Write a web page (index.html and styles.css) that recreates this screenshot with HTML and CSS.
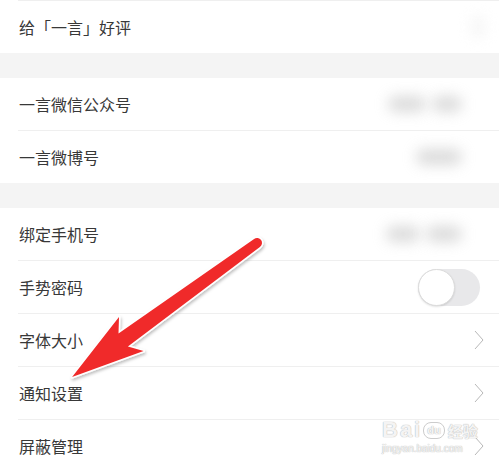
FILE: index.html
```html
<!DOCTYPE html>
<html lang="zh-CN">
<head>
    <meta charset="UTF-8">
    <meta name="viewport" content="width=device-width, initial-scale=1.0">
    <title>设置</title>
    <link rel="stylesheet" href="styles.css">
</head>
<body>
    <div class="settings">
        <div class="group group-cut">
            <div class="row">
                <span class="label">给「一言」好评</span>
                <span class="value"><span class="fuzz fuzz-chev"></span></span>
            </div>
        </div>

        <div class="gap"></div>

        <div class="group">
            <div class="row">
                <span class="label">一言微信公众号</span>
                <span class="value">
                    <span class="fuzz fuzz-a"></span>
                    <span class="fuzz fuzz-b"></span>
                </span>
            </div>
            <div class="row">
                <span class="label">一言微博号</span>
                <span class="value"><span class="fuzz fuzz-c"></span></span>
            </div>
        </div>

        <div class="gap"></div>

        <div class="group">
            <div class="row">
                <span class="label">绑定手机号</span>
                <span class="value">
                    <span class="fuzz fuzz-d"></span>
                    <span class="fuzz fuzz-e"></span>
                </span>
            </div>
            <div class="row">
                <span class="label">手势密码</span>
                <span class="switch"><span class="knob"></span></span>
            </div>
            <div class="row">
                <span class="label">字体大小</span>
                <svg class="chevron" viewBox="0 0 10 20"><path d="M1 1 L9 10 L1 19"/></svg>
            </div>
            <div class="row">
                <span class="label">通知设置</span>
                <svg class="chevron" viewBox="0 0 10 20"><path d="M1 1 L9 10 L1 19"/></svg>
            </div>
            <div class="row">
                <span class="label">屏蔽管理</span>
                <svg class="chevron" viewBox="0 0 10 20"><path d="M1 1 L9 10 L1 19"/></svg>
            </div>
        </div>
    </div>

    <!-- annotation arrow drawn over the screenshot -->
    <svg class="arrow" viewBox="0 0 499 465" width="499" height="465">
        <defs>
            <filter id="shade" x="-10%" y="-10%" width="130%" height="130%">
                <feDropShadow dx="1" dy="2" stdDeviation="1.5" flood-color="#000" flood-opacity="0.25"/>
            </filter>
        </defs>
        <path d="M254.1 238.9 L118.5 333.5 L119 317.1 L72.1 377.1 L143.6 351.1 L127.9 346.5 L259.9 247.1 A5 5 0 0 0 254.1 238.9 Z"
              fill="#f02a2a" stroke="#fff" stroke-width="3" stroke-linejoin="round" paint-order="stroke" filter="url(#shade)"/>
    </svg>

    <div class="watermark">
        <div class="wm-logo">Bai<span class="wm-du">du</span><span class="wm-jy">经验</span></div>
        <div class="wm-url">jingyan.baidu.com</div>
    </div>
</body>
</html>
```

FILE: styles.css
```css
body {
    margin: 0;
    width: 499px;
    height: 465px;
    overflow: hidden;
    position: relative;
    background: #fff;
    font-family: "Noto Sans CJK SC", "Noto Sans", sans-serif;
    color: #383838;
}
.group {
    background: #fff;
}
.group-cut {
    border-top: 1px solid #efefef;
    margin-left: 18px;
}
.group-cut .row {
    margin-left: 0;
}
.gap {
    height: 25px;
    background: #f4f4f4;
}
.row {
    height: 52px;
    margin-left: 18px;
    padding: 0 15px 0 1px;
    display: flex;
    align-items: center;
    justify-content: space-between;
    font-size: 16px;
}
.row + .row {
    border-top: 1px solid #efefef;
}
.value {
    display: flex;
    align-items: center;
    gap: 6px;
    height: 24px;
}
.fuzz {
    display: block;
    height: 16px;
    border-radius: 8px;
    background: #c8c8c8;
    filter: blur(7px);
    opacity: 0.65;
}
.fuzz-chev {
    width: 12px;
    height: 22px;
    background: #eee;
}
.fuzz-a { width: 38px; }
.fuzz-b { width: 30px; margin-right: 22px; }
.fuzz-c { width: 46px; margin-right: 22px; }
.fuzz-d { width: 34px; }
.fuzz-e { width: 36px; margin-right: 22px; }
.switch {
    width: 62px;
    height: 37px;
    border-radius: 19px;
    background: #e8e8ea;
    position: relative;
    margin-right: 4px;
}
.knob {
    position: absolute;
    left: 0;
    top: 0;
    width: 35px;
    height: 35px;
    border-radius: 50%;
    background: #fff;
    border: 1px solid #dcdcdc;
    box-shadow: 0 1px 2px rgba(0, 0, 0, 0.12);
}
.chevron {
    width: 10px;
    height: 20px;
}
.chevron path {
    fill: none;
    stroke: #b8b8b8;
    stroke-width: 1;
}
.arrow {
    position: absolute;
    left: 0;
    top: 0;
    pointer-events: none;
}
.watermark {
    position: absolute;
    left: 382px;
    top: 419px;
    color: rgba(255, 255, 255, 0.85);
    font-family: "Liberation Sans", sans-serif;
    text-shadow: 0 0 1px #bbb, 0 0 1px #bbb;
    line-height: 1;
}
.wm-logo {
    font-size: 22px;
    font-weight: bold;
    letter-spacing: 2px;
    display: flex;
    align-items: center;
}
.wm-du {
    font-size: 11px;
    letter-spacing: 0;
    margin-left: 1px;
    padding: 2px 3px;
    border: 1.5px solid #ccc;
    border-radius: 8px;
}
.wm-jy {
    font-family: "Noto Sans CJK SC", sans-serif;
    font-size: 15px;
    letter-spacing: 0;
    margin-left: 3px;
}
.wm-url {
    font-size: 10px;
    margin-top: 3px;
}
```
